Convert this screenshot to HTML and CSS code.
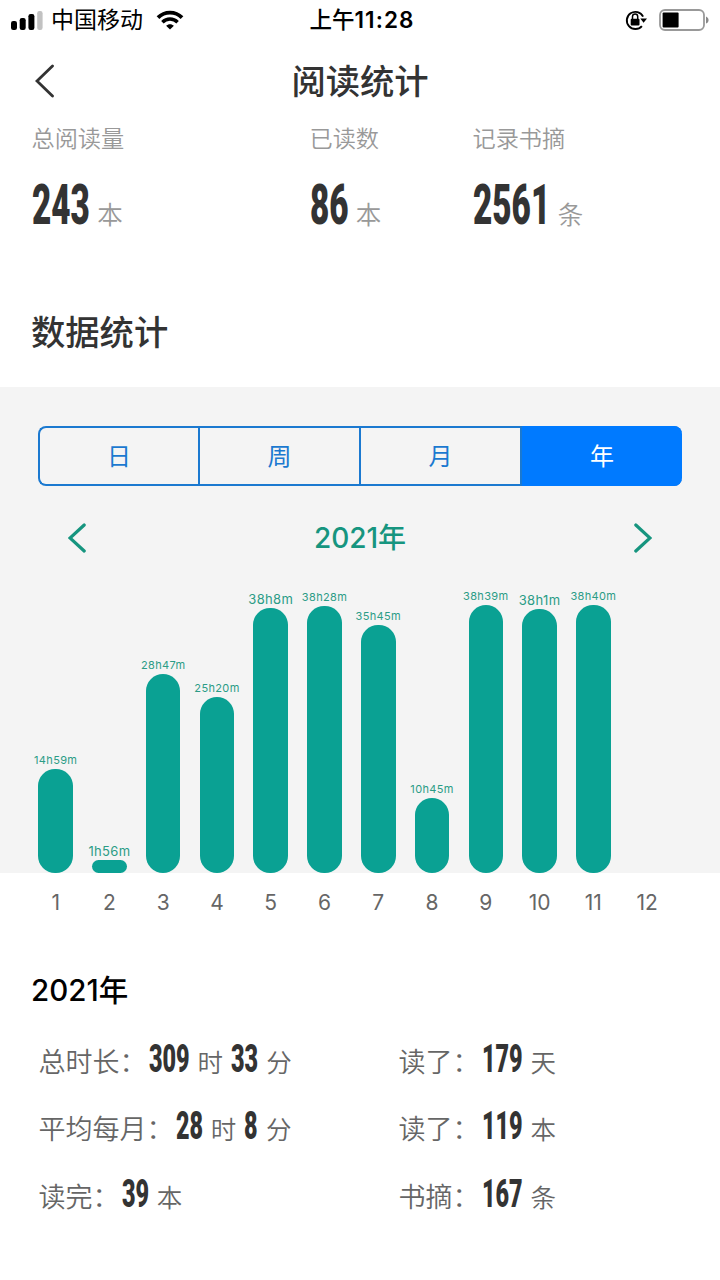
FILE: index.html
```html
<!DOCTYPE html>
<html lang="zh-CN">
<head>
    <meta charset="UTF-8">
    <meta name="viewport" content="width=device-width, initial-scale=1.0">
    <title>阅读统计</title>
    <link rel="stylesheet" href="styles.css">
</head>
<body>
    <div class="status-bar">
        <div class="status-left">
            <svg class="signal" width="32" height="20" viewBox="0 0 32 20">
                <rect x="0" y="11" width="6" height="9" rx="2.2"/>
                <rect x="8.7" y="8" width="6" height="12" rx="2.2"/>
                <rect x="17.4" y="4" width="6" height="16" rx="2.2"/>
                <rect x="26.2" y="1" width="5.4" height="19" rx="2.2" fill="#c2c2c2"/>
            </svg>
            <span class="carrier">中国移动</span>
            <svg class="wifi" width="28" height="20" viewBox="0 0 28 20">
                <path d="M2 7.6C8.6 .9 19.4 .9 26 7.6" fill="none" stroke="#000" stroke-width="3.8"/>
                <path d="M6.4 12.2C10.7 8 17.3 8 21.6 12.2" fill="none" stroke="#000" stroke-width="3.5"/>
                <path d="M10.1 15.8C12.3 13.6 15.7 13.6 17.9 15.8L14 19.6Z"/>
            </svg>
        </div>
        <div class="status-time">上午<span class="clock">11:28</span></div>
        <div class="status-right">
            <svg width="22" height="22" viewBox="0 0 22 22">
                <path d="M18.1 7.6A8.6 8.6 0 1 0 16.9 17.1" fill="none" stroke="#000" stroke-width="1.9"/>
                <path d="M15.3 9.4H22L18.6 13.8Z"/>
                <rect x="5.7" y="9.8" width="8.8" height="6.6" rx="1"/>
                <path d="M7.5 10V7.6a2.6 2.6 0 0 1 5.2 0V10" fill="none" stroke="#000" stroke-width="1.5"/>
            </svg>
            <svg width="51" height="22" viewBox="0 0 51 22">
                <rect x="1" y="1" width="44" height="20" rx="5" fill="#fff" stroke="#999" stroke-width="1.8"/>
                <rect x="3.6" y="3.6" width="16" height="14.8" rx="1"/>
                <path d="M47 7.4c3.4 1.4 3.4 5.8 0 7.2Z" fill="#888"/>
            </svg>
        </div>
    </div>

    <div class="navbar">
        <svg class="back" width="20" height="34" viewBox="0 0 20 34">
            <path d="M17.5 2L2 17L17.5 32"/>
        </svg>
        <h1>阅读统计</h1>
    </div>

    <div class="stats">
        <div class="stat">
            <div class="stat-label">总阅读量</div>
            <div class="stat-value"><span class="num n3">243</span><span class="unit">本</span></div>
        </div>
        <div class="stat">
            <div class="stat-label">已读数</div>
            <div class="stat-value"><span class="num n2">86</span><span class="unit">本</span></div>
        </div>
        <div class="stat">
            <div class="stat-label">记录书摘</div>
            <div class="stat-value"><span class="num n4">2561</span><span class="unit">条</span></div>
        </div>
    </div>

    <h2 class="section-title">数据统计</h2>

    <div class="panel">
        <div class="tabs">
            <div class="tab">日</div>
            <div class="tab">周</div>
            <div class="tab">月</div>
            <div class="tab active">年</div>
        </div>
        <div class="year-nav">
            <svg width="18" height="30" viewBox="0 0 18 30"><path d="M16.2 2L2 15L16.2 28"/></svg>
            <span>2021年</span>
            <svg width="18" height="30" viewBox="0 0 18 30"><path d="M1.8 2L16 15L1.8 28"/></svg>
        </div>
        <div class="chart">
            <div class="col"><span class="time">14h59m</span><div class="bar" style="height: 104px"></div></div>
            <div class="col"><span class="time short">1h56m</span><div class="bar" style="height: 13.5px"></div></div>
            <div class="col"><span class="time">28h47m</span><div class="bar" style="height: 199.5px"></div></div>
            <div class="col"><span class="time">25h20m</span><div class="bar" style="height: 176px"></div></div>
            <div class="col"><span class="time short">38h8m</span><div class="bar" style="height: 265px"></div></div>
            <div class="col"><span class="time">38h28m</span><div class="bar" style="height: 267.5px"></div></div>
            <div class="col"><span class="time">35h45m</span><div class="bar" style="height: 248px"></div></div>
            <div class="col"><span class="time">10h45m</span><div class="bar" style="height: 75px"></div></div>
            <div class="col"><span class="time">38h39m</span><div class="bar" style="height: 268.5px"></div></div>
            <div class="col"><span class="time short">38h1m</span><div class="bar" style="height: 264px"></div></div>
            <div class="col"><span class="time">38h40m</span><div class="bar" style="height: 268.5px"></div></div>
            <div class="col"></div>
        </div>
    </div>

    <div class="months">
        <span>1</span><span>2</span><span>3</span><span>4</span><span>5</span><span>6</span>
        <span>7</span><span>8</span><span>9</span><span>10</span><span>11</span><span>12</span>
    </div>

    <h3 class="summary-title">2021年</h3>

    <div class="summary">
        <div class="item"><span class="name">总时长：</span><span class="num n3">309</span><span class="unit">时</span><span class="num n2">33</span><span class="unit">分</span></div>
        <div class="item"><span class="name">读了：</span><span class="num n3">179</span><span class="unit">天</span></div>
        <div class="item"><span class="name">平均每月：</span><span class="num n2">28</span><span class="unit">时</span><span class="num n1">8</span><span class="unit">分</span></div>
        <div class="item"><span class="name">读了：</span><span class="num n3">119</span><span class="unit">本</span></div>
        <div class="item"><span class="name">读完：</span><span class="num n2">39</span><span class="unit">本</span></div>
        <div class="item"><span class="name">书摘：</span><span class="num n3">167</span><span class="unit">条</span></div>
    </div>
</body>
</html>
```
FILE: styles.css
```css
* {
    margin: 0;
    padding: 0;
    box-sizing: border-box;
}

body {
    width: 720px;
    height: 1280px;
    overflow: hidden;
    background: #fff;
    color: #333;
    font-family: Inter, 'Noto Sans CJK SC', sans-serif;
}

svg {
    display: block;
    flex: none;
}

.status-bar {
    display: grid;
    grid-template-columns: 1fr auto 1fr;
    align-items: center;
    height: 40px;
    padding: 0 10px 0 11px;
    color: #000;
}

.status-left,
.status-right {
    display: flex;
    align-items: center;
}

.status-right {
    justify-content: flex-end;
    gap: 12px;
}

.carrier {
    margin: 0 13px 0 8px;
    font-size: 23px;
    line-height: 40px;
}

.status-time {
    padding-left: 3px;
    font-size: 22.5px;
    font-weight: 500;
    line-height: 40px;
}

.clock {
    font-weight: 600;
    letter-spacing: 1.1px;
}

.navbar {
    display: grid;
    grid-template-columns: 1fr auto 1fr;
    align-items: center;
    height: 82px;
    padding: 0 35px;
}

.back {
    fill: none;
    stroke: #333;
    stroke-width: 2.8;
    stroke-linecap: round;
}

h1,
.section-title {
    font-size: 34.3px;
    font-weight: 500;
    line-height: 52px;
}

h1 {
    padding-top: 2px;
}

.stats {
    display: grid;
    grid-template-columns: 278px 163px 1fr;
    padding-left: 31.5px;
}

.stat-label {
    font-size: 23.2px;
    font-weight: 350;
    line-height: 34px;
    color: #999;
}

.stat-value {
    display: flex;
    align-items: baseline;
    height: 88px;
    padding-top: 17px;
    font-size: 55.5px;
    line-height: 66px;
}

/* condensed digits: squeezed glyphs in a box of the squeezed width */
.num {
    display: inline-block;
    font-family: Roboto, sans-serif;
    font-weight: 900;
    transform: scaleX(0.6);
    transform-origin: left;
    white-space: nowrap;
}

.n1 {
    width: 0.35em;
}

.n2 {
    width: 0.7em;
}

.n3 {
    width: 1.05em;
}

.n4 {
    width: 1.4em;
}

.unit {
    font-size: 25.5px;
    font-weight: 350;
}

.stat-value .unit {
    margin-left: 7.5px;
    color: #999;
}

.section-title {
    height: 143px;
    padding: 63px 31px 0;
}

.panel {
    height: 486px;
    padding-top: 39px;
    background: #f4f4f4;
}

.tabs {
    display: grid;
    grid-template-columns: 160px 161px 161px 160px;
    width: 644px;
    height: 60px;
    margin-left: 38px;
    border: 2px solid #1b79d0;
    border-right: 0;
    border-radius: 8px;
}

.tab {
    border-right: 2px solid #1b79d0;
    color: #1b79d0;
    font-size: 24px;
    line-height: 58px;
    text-align: center;
}

.tab.active {
    height: 60px;
    margin-top: -2px;
    border: 0;
    border-radius: 0 8px 8px 0;
    background: #007aff;
    color: #fff;
    line-height: 62px;
}

.year-nav {
    display: flex;
    justify-content: space-between;
    align-items: center;
    height: 103px;
    padding: 0 68px;
    color: #16957f;
    font-size: 28px;
    font-weight: 500;
}

.year-nav span {
    padding-bottom: 3px;
}

.year-nav svg {
    fill: none;
    stroke: #16957f;
    stroke-width: 3.2;
    stroke-linecap: round;
}

.chart,
.months {
    display: grid;
    grid-template-columns: repeat(12, 53.77px);
    padding-left: 28.8px;
}

.chart {
    height: 284px;
}

.col {
    display: flex;
    flex-direction: column;
    align-items: center;
    justify-content: flex-end;
}

.bar {
    width: 34.5px;
    border-radius: 17px;
    background: #0aa193;
}

.time {
    margin-bottom: 2px;
    color: #2b9c86;
    font-size: 11px;
    letter-spacing: 0.35px;
    line-height: 13px;
    white-space: nowrap;
}

.time.short {
    font-size: 13px;
}

.months {
    height: 86px;
    color: #666;
    font-size: 21px;
    line-height: 59px;
    text-align: center;
}

.summary-title {
    height: 67px;
    padding-left: 31px;
    color: #000;
    font-size: 29.5px;
    font-weight: 500;
    line-height: 63px;
}

.summary {
    display: grid;
    grid-template-columns: 360px 1fr;
    grid-auto-rows: 67.3px;
    padding-left: 38.5px;
}

.item {
    display: flex;
    align-items: baseline;
    color: #666;
    font-size: 27px;
    font-weight: 350;
    line-height: 67px;
}

.item .name {
    margin-right: 2px;
}

.item .num {
    color: #333;
    font-size: 39px;
}

.item .unit {
    margin: 0 8px;
}
```
